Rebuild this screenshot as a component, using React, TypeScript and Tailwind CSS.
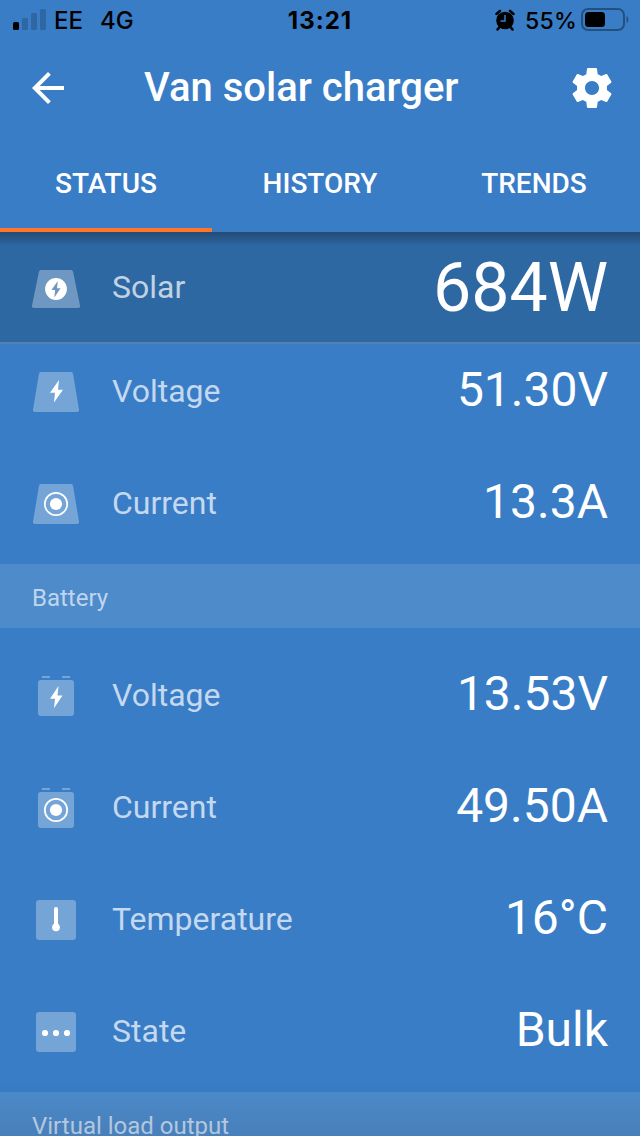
import type { ReactNode } from 'react';

function PanelShape() {
  return (
    <path
      d="M9 0h30a2 2 0 0 1 2 1.600L47 37.600A2 2 0 0 1 45 40H3a2 2 0 0 1-2-2.400L7 1.600A2 2 0 0 1 9 0z"
      fill="#75a5d6"
    />
  );
}

function BatteryShape() {
  return (
    <g fill="#75a5d6">
      <rect x="10" y="0" width="8" height="2" />
      <rect x="30" y="0" width="8" height="2" />
      <rect x="6" y="4" width="36" height="36" rx="3" />
    </g>
  );
}

function Target({ cy }: { cy: number }) {
  return (
    <>
      <circle cx="24" cy={cy} r="11.2" fill="none" stroke="#fff" strokeWidth="1.700" />
      <circle cx="24" cy={cy} r="6.100" fill="#fff" />
    </>
  );
}

function RowIcon({ children }: { children: ReactNode }) {
  return (
    <svg width="48" height="40" viewBox="0 0 48 40" className="shrink-0">
      {children}
    </svg>
  );
}

const solarRows = [
  {
    label: 'Voltage',
    value: '51.30V',
    className: 'h-24 mb-2',
    icon: (
      <RowIcon>
        <PanelShape />
        <path d="M27 8 18 20.800h5L22 30.500l9-12.800h-5z" fill="#fff" />
      </RowIcon>
    ),
  },
  {
    label: 'Current',
    value: '13.3A',
    className: 'h-28',
    icon: (
      <RowIcon>
        <PanelShape />
        <Target cy={20} />
      </RowIcon>
    ),
  },
];

const batteryRows = [
  {
    label: 'Voltage',
    value: '13.53V',
    icon: (
      <RowIcon>
        <BatteryShape />
        <path d="M26.500 10 18 22.800h5L22 32.300l8.500-12.800h-5z" fill="#fff" />
      </RowIcon>
    ),
  },
  {
    label: 'Current',
    value: '49.50A',
    icon: (
      <RowIcon>
        <BatteryShape />
        <Target cy={22} />
      </RowIcon>
    ),
  },
  {
    label: 'Temperature',
    value: '16°C',
    icon: (
      <RowIcon>
        <rect x="4" width="40" height="40" rx="3" fill="#75a5d6" />
        <rect x="22" y="7" width="4" height="20" rx="2" fill="#fff" />
        <circle cx="24" cy="27.300" r="3.900" fill="#fff" />
      </RowIcon>
    ),
  },
  {
    label: 'State',
    value: 'Bulk',
    icon: (
      <RowIcon>
        <rect x="4" width="40" height="40" rx="3" fill="#75a5d6" />
        <circle cx="13" cy="21" r="3.100" fill="#fff" />
        <circle cx="24" cy="21" r="3.100" fill="#fff" />
        <circle cx="35" cy="21" r="3.100" fill="#fff" />
      </RowIcon>
    ),
  },
];

interface RowProps {
  icon: ReactNode;
  label: string;
  value: string;
  className?: string;
}

function Row({ icon, label, value, className = 'h-28' }: RowProps) {
  return (
    <div className={`flex items-center px-8 ${className}`}>
      {icon}
      <span className="ml-8 pb-[2px] text-[32px] leading-none text-[#c4d8ef]">{label}</span>
      <span className="ml-auto pb-1 text-[48px] leading-none">{value}</span>
    </div>
  );
}

function SectionHeader({ title }: { title: string }) {
  return (
    <div className="h-16 shrink-0 bg-[#4d8bcb] px-8 pt-[2px] text-[24px] leading-[64px] text-[#c0d5ec]">
      {title}
    </div>
  );
}

function StatusBar() {
  return (
    <div className="grid h-10 shrink-0 grid-cols-3 items-center font-['Inter',sans-serif] text-[23px] leading-none text-black">
      <div className="flex items-center pl-[13px] font-medium">
        <svg width="33" height="22" viewBox="0 0 33 22">
          <rect y="13" width="6" height="8" rx="1.500" />
          <g fill="#2e67a1">
            <rect x="9" y="9" width="6" height="12" rx="1.500" />
            <rect x="18" y="4" width="6" height="17" rx="1.500" />
            <rect x="27" y="0" width="6" height="21" rx="1.500" />
          </g>
        </svg>
        <span className="ml-2 pt-[2px] text-[24px]">EE</span>
        <span className="ml-[17px] pt-[2px] text-[24px]">4G</span>
      </div>
      <div className="pt-[2px] text-center text-[24px] font-bold tracking-[1px]">13:21</div>
      <div className="flex items-center justify-end pr-[11px]">
        <svg width="20" height="22" viewBox="0 0 20 22" className="mr-[10px]">
          <circle cx="10" cy="11.500" r="8.800" />
          <path
            d="M1.500 5 5 1.800M18.500 5 15 1.800M4.500 18l-2 2.500M15.500 18l2 2.500"
            stroke="#000"
            strokeWidth="2.500"
            strokeLinecap="round"
          />
          <path d="M10 6v6H5.500" fill="none" stroke="#397dc6" strokeWidth="1.500" />
        </svg>
        <span className="pt-[2px] font-medium tracking-[0.2px]">55%</span>
        <svg width="48" height="24" viewBox="0 0 48 24" className="ml-1">
          <rect x="1" y="1" width="42" height="21" rx="6" fill="none" stroke="#24507f" strokeWidth="2" />
          <rect x="4" y="4" width="20" height="15" rx="3.500" />
          <path d="M45.500 8c2.500 1 2.500 6 0 7z" fill="#24507f" />
        </svg>
      </div>
    </div>
  );
}

export default function App() {
  return (
    <div className="relative flex h-[1136px] w-[640px] flex-col overflow-hidden bg-[#397dc6] font-['Roboto',sans-serif] text-white">
      <StatusBar />

      <header className="flex h-24 shrink-0 items-center pr-7 pl-8">
        <svg width="32" height="32" viewBox="4 4 16 16" fill="#fff">
          <path d="M20 11H7.830l5.590-5.590L12 4l-8 8 8 8 1.410-1.410L7.830 13H20v-2z" />
        </svg>
        <h1 className="ml-20 text-[40px] leading-none font-medium">Van solar charger</h1>
        <svg width="40" height="40" viewBox="2 2 20 20" fill="#fff" className="ml-auto">
          <path d="M19.430 12.980c.040-.320.070-.640.070-.980s-.030-.660-.070-.980l2.110-1.650c.190-.150.240-.420.120-.640l-2-3.460c-.120-.220-.390-.300-.610-.220l-2.490 1c-.520-.400-1.080-.730-1.690-.980l-.380-2.650C14.460 2.180 14.250 2 14 2h-4c-.250 0-.460.180-.490.420l-.380 2.650c-.610.250-1.170.590-1.690.980l-2.490-1c-.230-.090-.490 0-.610.220l-2 3.460c-.130.220-.070.490.120.640l2.110 1.650c-.040.320-.070.650-.070.980s.030.660.070.980l-2.110 1.650c-.190.150-.240.420-.120.640l2 3.460c.120.220.390.300.610.220l2.490-1c.520.400 1.080.730 1.690.980l.380 2.650c.030.240.240.420.490.420h4c.250 0 .460-.180.490-.420l.380-2.650c.610-.250 1.170-.590 1.690-.980l2.490 1c.230.090.490 0 .610-.220l2-3.460c.120-.220.070-.490-.120-.640l-2.110-1.650zM12 15.500c-1.930 0-3.500-1.570-3.500-3.500s1.570-3.500 3.500-3.500 3.500 1.570 3.500 3.500-1.570 3.500-3.500 3.500z" />
        </svg>
      </header>

      <nav className="grid h-24 shrink-0 grid-cols-[212px_216px_212px] text-center text-[28px] leading-[95px] font-medium">
        <div className="h-24 border-b-4 border-[#ff7529]">STATUS</div>
        <div>HISTORY</div>
        <div>TRENDS</div>
      </nav>

      <div className="flex h-28 shrink-0 items-center border-b-2 border-[#5481b1] bg-[#2e68a2] bg-linear-to-b from-[#234b76] to-[#2e68a2] to-[14px] px-8">
        <svg width="48" height="40" viewBox="0 0 48 40" className="mt-1 shrink-0">
          <path
            d="M9 1h30a2 2 0 0 1 2 1.600L48 36.600A2 2 0 0 1 46 39H2a2 2 0 0 1-2-2.400L7 2.600A2 2 0 0 1 9 1z"
            fill="#6e97c1"
          />
          <circle cx="24" cy="20" r="10.900" fill="#fff" />
          <path d="M25.800 12 19.500 21h3.600l-.7 7.500 6.100-9.300h-3.500z" fill="#6e97c1" />
        </svg>
        <span className="ml-8 pb-px text-[32px] leading-none text-[#c0d2e3]">Solar</span>
        <span className="ml-auto pt-[2px] text-[68px] leading-none">684W</span>
      </div>

      <div className="shrink-0 pb-1">
        {solarRows.map((row) => (
          <Row key={row.label} {...row} />
        ))}
      </div>

      <SectionHeader title="Battery" />

      <div className="shrink-0 pt-3 pb-1">
        {batteryRows.map((row) => (
          <Row key={row.label} {...row} />
        ))}
      </div>

      <SectionHeader title="Virtual load output" />

      {/* fade at the bottom of the scroll area */}
      <div className="pointer-events-none absolute inset-x-0 bottom-0 h-14 bg-linear-to-t from-black/8 to-transparent" />
    </div>
  );
}
